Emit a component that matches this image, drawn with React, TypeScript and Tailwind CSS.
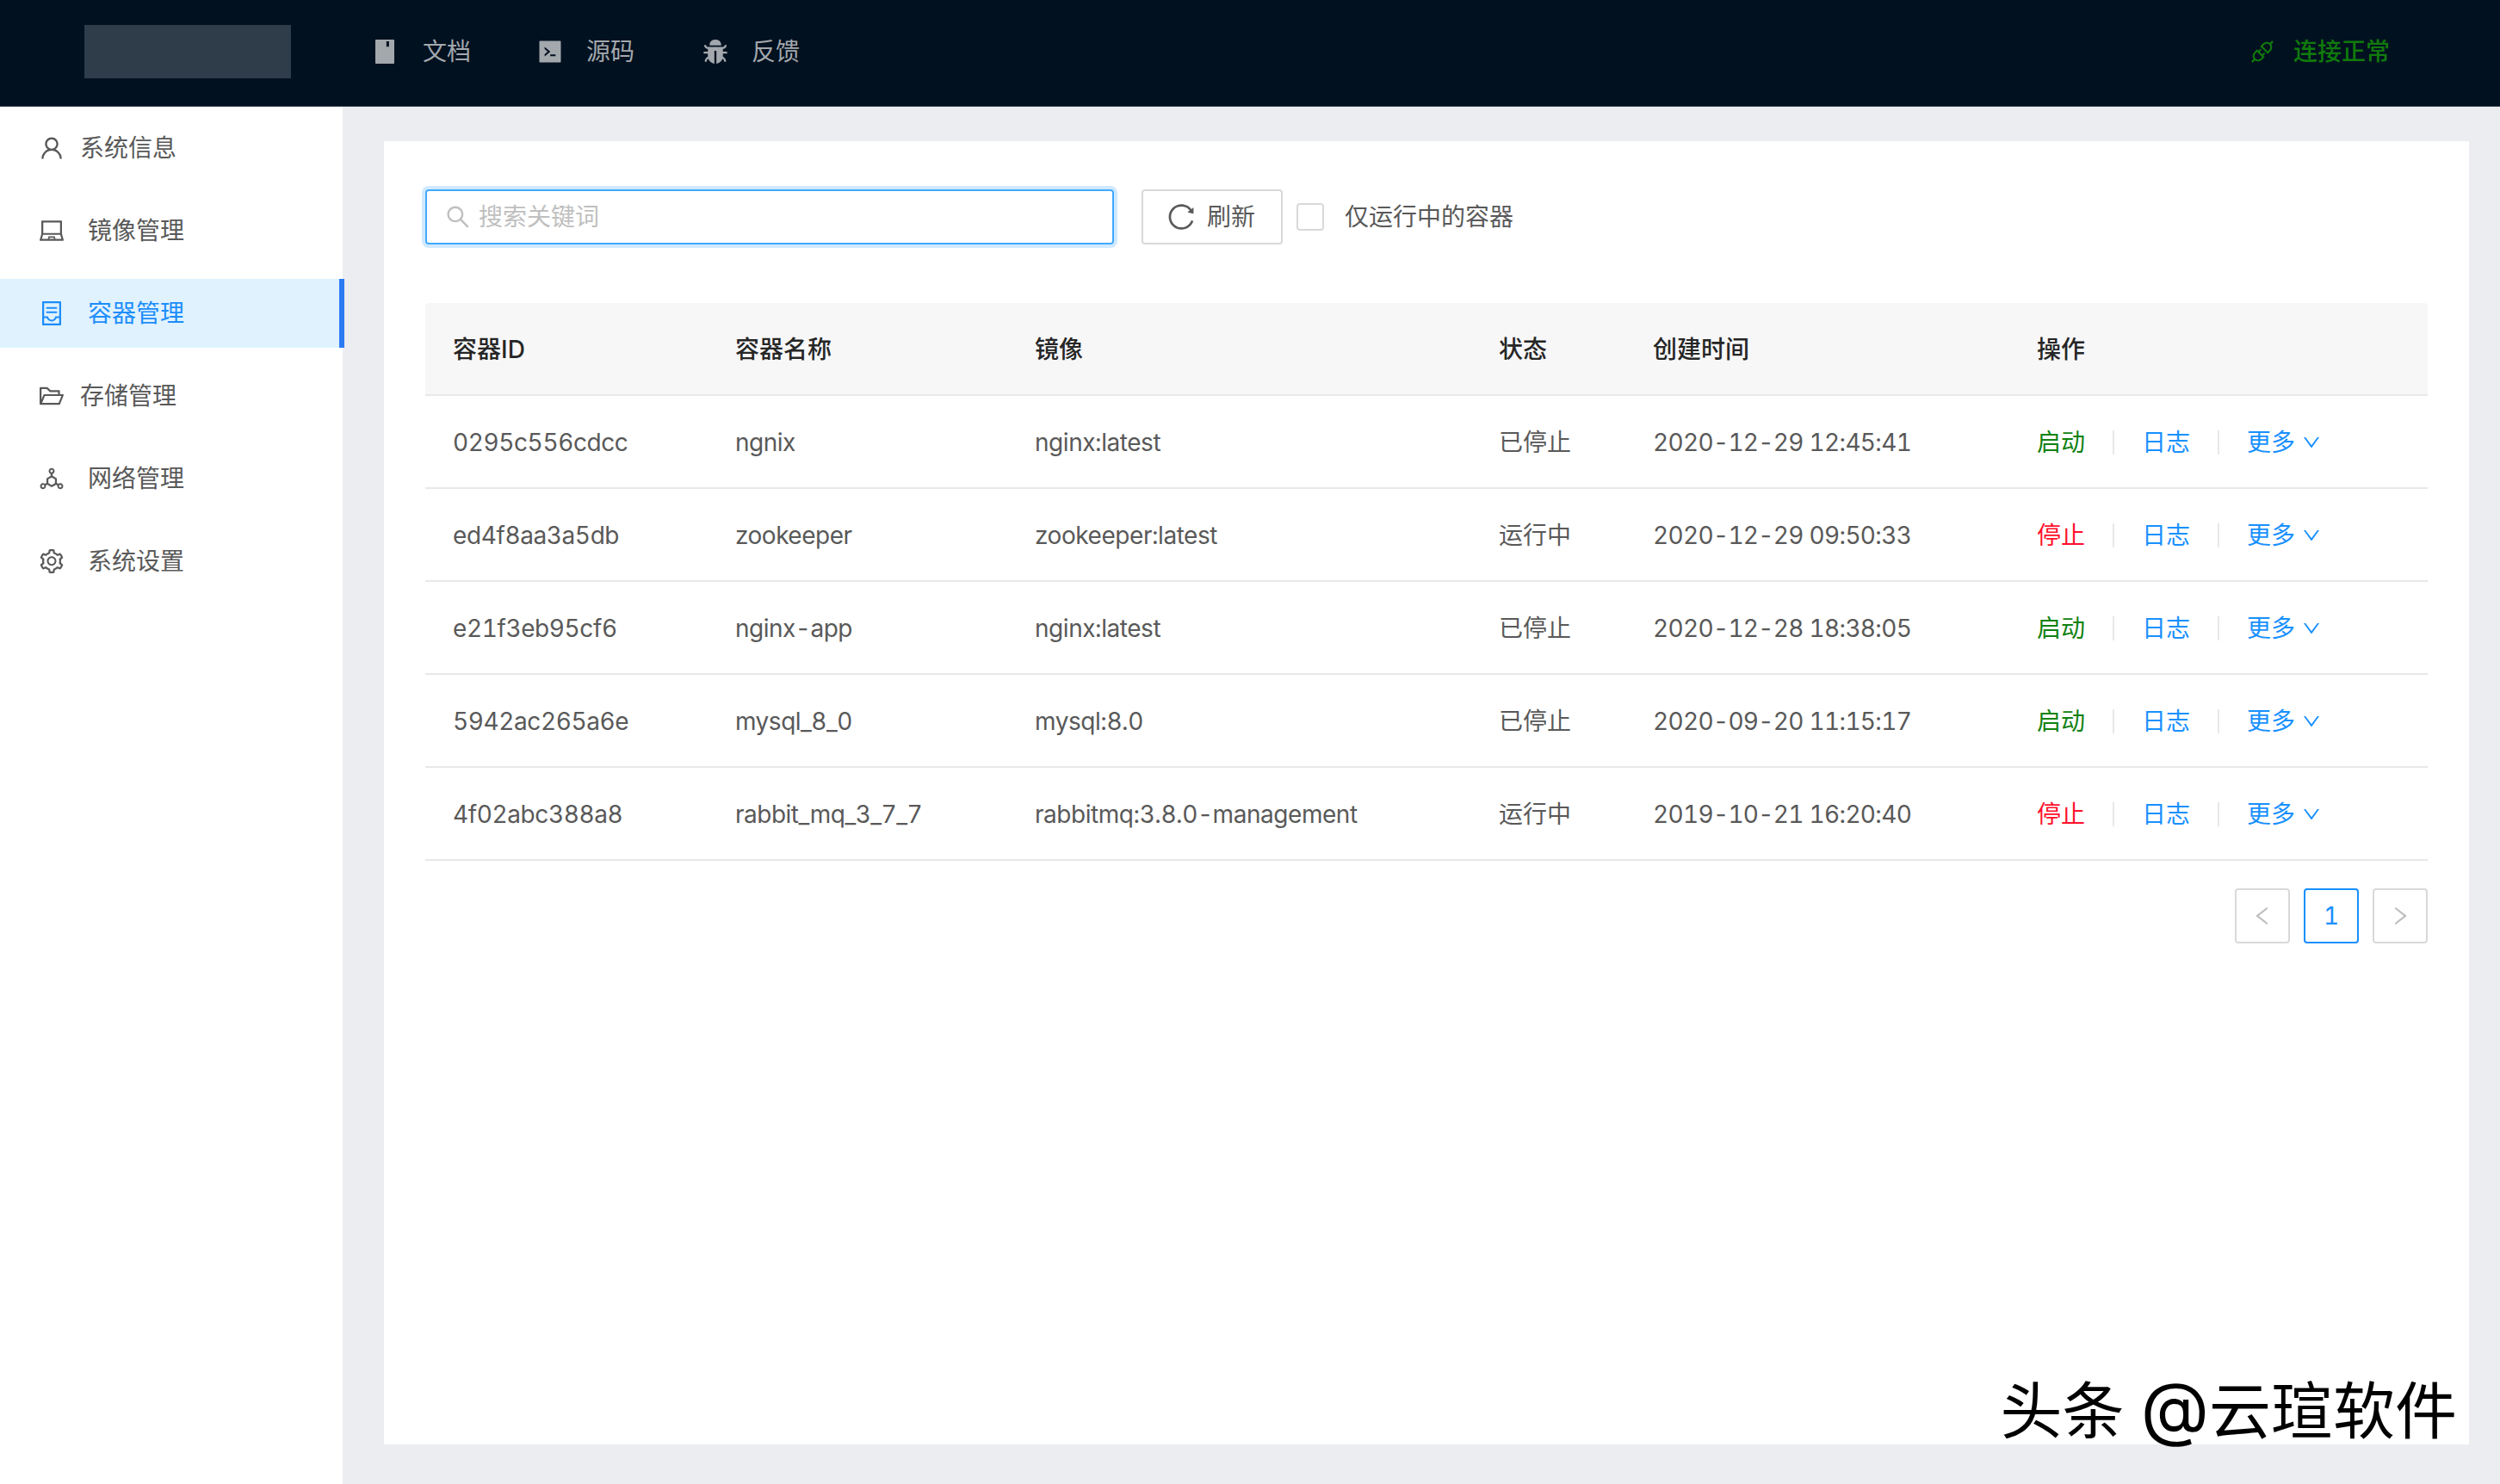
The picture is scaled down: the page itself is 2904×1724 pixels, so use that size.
import type { ReactNode } from "react";
import {
  AiFillBook,
  AiFillBug,
  AiFillCode,
  AiOutlineApi,
  AiOutlineContainer,
  AiOutlineDeploymentUnit,
  AiOutlineDown,
  AiOutlineFolderOpen,
  AiOutlineLaptop,
  AiOutlineLeft,
  AiOutlineReload,
  AiOutlineRight,
  AiOutlineSearch,
  AiOutlineSetting,
  AiOutlineUser,
} from "react-icons/ai";

const fontStack = "font-['Inter','Noto_Sans_CJK_SC',sans-serif]";

const topLinks = [
  { label: "文档", icon: <AiFillBook size={32} />, cls: "gap-[28px]" },
  { label: "源码", icon: <AiFillCode size={32} />, cls: "ml-[76px] gap-[26px]" },
  { label: "反馈", icon: <AiFillBug size={32} />, cls: "ml-[78px] gap-[26px]" },
];

const menu: { label: string; icon: ReactNode; gap: string; active?: boolean }[] = [
  { label: "系统信息", icon: <AiOutlineUser size={32} />, gap: "gap-[17px]" },
  { label: "镜像管理", icon: <AiOutlineLaptop size={32} />, gap: "gap-[26px]" },
  { label: "容器管理", icon: <AiOutlineContainer size={32} />, gap: "gap-[26px]", active: true },
  { label: "存储管理", icon: <AiOutlineFolderOpen size={32} />, gap: "gap-[17px]" },
  { label: "网络管理", icon: <AiOutlineDeploymentUnit size={32} />, gap: "gap-[26px]" },
  { label: "系统设置", icon: <AiOutlineSetting size={32} />, gap: "gap-[26px]" },
];

const containers = [
  { id: "0295c556cdcc", name: "ngnix", image: "nginx:latest", status: "已停止", time: "2020-12-29 12:45:41", running: false },
  { id: "ed4f8aa3a5db", name: "zookeeper", image: "zookeeper:latest", status: "运行中", time: "2020-12-29 09:50:33", running: true },
  { id: "e21f3eb95cf6", name: "nginx-app", image: "nginx:latest", status: "已停止", time: "2020-12-28 18:38:05", running: false },
  { id: "5942ac265a6e", name: "mysql_8_0", image: "mysql:8.0", status: "已停止", time: "2020-09-20 11:15:17", running: false },
  { id: "4f02abc388a8", name: "rabbit_mq_3_7_7", image: "rabbitmq:3.8.0-management", status: "运行中", time: "2019-10-21 16:20:40", running: true },
];

const columns = [
  { title: "容器ID", cls: "w-[328px] rounded-tl-[4px]" },
  { title: "容器名称", cls: "w-[348px]" },
  { title: "镜像", cls: "w-[539px]" },
  { title: "状态", cls: "w-[179px]" },
  { title: "创建时间", cls: "w-[446px]" },
  { title: "操作", cls: "w-[486px] rounded-tr-[4px]" },
];

function Sep() {
  return <span className="mx-[32px] h-[28px] w-[2px] bg-[#e8e8e8]" />;
}

export default function App() {
  return (
    <div className={`relative flex h-[1724px] w-[2904px] flex-col overflow-hidden bg-[#ebedf1] text-[28px] tabular-nums text-[#595959] ${fontStack}`}>
      <header className="flex h-[124px] shrink-0 items-center border-b border-[#33404c] bg-[#021120] pb-[3px]">
        <div className="ml-[98px] h-[62px] w-[240px] bg-[#2f3c4a]" />
        <nav className="ml-[93px] flex items-center text-[#a3a8ad]">
          {topLinks.map((l) => (
            <div key={l.label} className={`flex items-center ${l.cls}`}>
              {l.icon}
              <span>{l.label}</span>
            </div>
          ))}
        </nav>
        <div className="ml-auto mr-[128px] flex items-center gap-[20px] font-medium text-[#107a0c]">
          <AiOutlineApi size={32} />
          <span>连接正常</span>
        </div>
      </header>

      <div className="flex flex-1">
        <aside className="flex w-[398px] shrink-0 flex-col gap-[16px] bg-white pt-[8px]">
          {menu.map((m) => (
            <div
              key={m.label}
              className={`flex h-[80px] items-center pl-[44px] ${m.gap} ${
                m.active ? "w-[400px] border-r-[6px] border-[#2b7bf3] bg-[#dff2fe] text-[#1c8dfb]" : ""
              }`}
            >
              {m.icon}
              <span>{m.label}</span>
            </div>
          ))}
        </aside>

        <main className="flex flex-1 pb-[46px] pl-[48px] pr-[36px] pt-[40px]">
          <section className="relative flex-1 bg-white px-[48px] pt-[56px]">
            <div className="mb-[68px] flex h-[64px] items-center">
              <label className="flex h-[64px] w-[800px] items-center gap-[8px] rounded-[4px] border-2 border-[#40a9ff] pl-[20px] shadow-[0_0_0_4px_rgba(24,144,255,0.2)]">
                <AiOutlineSearch size={32} className="text-[#bfbfbf]" />
                <input
                  placeholder="搜索关键词"
                  className="min-w-0 flex-1 bg-transparent outline-none placeholder:text-[#bfbfbf]"
                />
              </label>
              <button className="ml-[32px] flex h-[64px] w-[164px] items-center gap-[12px] rounded-[4px] border-2 border-[#d9d9d9] bg-white pl-[26px]">
                <AiOutlineReload size={36} />
                <span>刷新</span>
              </button>
              <span className="ml-[16px] h-[32px] w-[32px] rounded-[4px] border-2 border-[#d9d9d9]" />
              <span className="ml-[24px]">仅运行中的容器</span>
            </div>

            <table className="w-[2326px] table-fixed border-separate border-spacing-0">
              <thead>
                <tr>
                  {columns.map((c) => (
                    <th
                      key={c.title}
                      className={`h-[108px] border-b-2 border-[#e8e8e8] bg-[#f7f7f8] pl-[32px] pt-[2px] text-left font-medium text-[#262626] ${c.cls}`}
                    >
                      {c.title}
                    </th>
                  ))}
                </tr>
              </thead>
              <tbody>
                {containers.map((c) => (
                  <tr key={c.id}>
                    <td className="h-[108px] border-b-2 border-[#e8e8e8] pl-[32px] pt-[2px] tracking-[-0.4px]">{c.id}</td>
                    <td className="border-b-2 border-[#e8e8e8] pl-[32px] pt-[2px] tracking-[-0.5px]">{c.name}</td>
                    <td className="border-b-2 border-[#e8e8e8] pl-[32px] pt-[2px] tracking-[-0.45px]">{c.image}</td>
                    <td className="border-b-2 border-[#e8e8e8] pl-[32px] pt-[2px]">{c.status}</td>
                    <td className="border-b-2 border-[#e8e8e8] pl-[32px] pt-[2px] tracking-[-0.68px]">{c.time}</td>
                    <td className="border-b-2 border-[#e8e8e8] pl-[32px] pt-[2px]">
                      <div className="flex items-center text-[#1890ff]">
                        <span className={c.running ? "text-[#ff0f2b]" : "text-[#118111]"}>{c.running ? "停止" : "启动"}</span>
                        <Sep />
                        <span>日志</span>
                        <Sep />
                        <span>更多</span>
                        <AiOutlineDown size={24} className="ml-[7px]" />
                      </div>
                    </td>
                  </tr>
                ))}
              </tbody>
            </table>

            <div className="mt-[32px] flex justify-end gap-[16px]">
              <span className="flex h-[64px] w-[64px] items-center justify-center rounded-[4px] border-2 border-[#d9d9d9] text-[#bfbfbf]">
                <AiOutlineLeft size={28} />
              </span>
              <span className="flex h-[64px] w-[64px] items-center justify-center rounded-[4px] border-2 border-[#1890ff] text-[#1890ff]">
                1
              </span>
              <span className="flex h-[64px] w-[64px] items-center justify-center rounded-[4px] border-2 border-[#d9d9d9] text-[#bfbfbf]">
                <AiOutlineRight size={28} />
              </span>
            </div>

            <div className="absolute bottom-[-6px] right-[14px] whitespace-nowrap text-[72px] leading-[90px] text-black">
              头条 <span className="text-[82px] leading-none">@</span>云瑄软件
            </div>
          </section>
        </main>
      </div>
    </div>
  );
}
